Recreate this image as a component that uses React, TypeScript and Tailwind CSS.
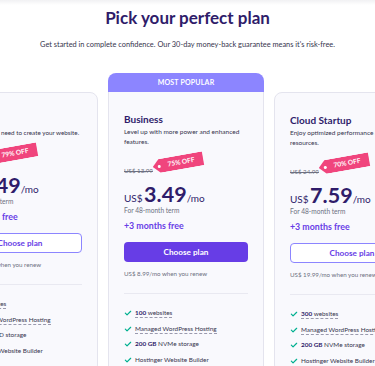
import React from 'react';

type Feature = { bold?: string; text: string; underline?: boolean };

type Plan = {
  name: string;
  desc: string;
  oldPrice: string;
  off: string;
  price: string;
  renew: string;
  popular?: boolean;
  oneLine?: boolean;
  features: Feature[];
};

const plans: Plan[] = [
  {
    name: 'Premium',
    desc: 'Everything you need to create your website.',
    oldPrice: 'US$ 11.99',
    off: '79% OFF',
    price: '2.49',
    renew: 'US$ 6.99/mo when you renew',
    oneLine: true,
    features: [
      { bold: '100', text: 'websites', underline: true },
      { text: 'Managed WordPress Hosting', underline: true },
      { bold: '100 GB', text: 'SSD storage' },
      { text: 'Hostinger Website Builder' },
    ],
  },
  {
    name: 'Business',
    desc: 'Level up with more power and enhanced features.',
    oldPrice: 'US$ 13.99',
    off: '75% OFF',
    price: '3.49',
    renew: 'US$ 8.99/mo when you renew',
    popular: true,
    features: [
      { bold: '100', text: 'websites', underline: true },
      { text: 'Managed WordPress Hosting', underline: true },
      { bold: '200 GB', text: 'NVMe storage' },
      { text: 'Hostinger Website Builder' },
    ],
  },
  {
    name: 'Cloud Startup',
    desc: 'Enjoy optimized performance & powerful resources.',
    oldPrice: 'US$ 24.99',
    off: '70% OFF',
    price: '7.59',
    renew: 'US$ 19.99/mo when you renew',
    features: [
      { bold: '300', text: 'websites', underline: true },
      { text: 'Managed WordPress Hosting', underline: true },
      { bold: '200 GB', text: 'NVMe storage' },
      { text: 'Hostinger Website Builder' },
    ],
  },
];

const Check = () => (
  <svg width="8" height="8" viewBox="0 0 12 12" fill="none" className="shrink-0">
    <path d="M2 6.3l2.6 2.6L10 3.4" stroke="#00b090" strokeWidth="1.8" strokeLinecap="round" strokeLinejoin="round" />
  </svg>
);

const PlanCard = ({ plan }: { plan: Plan }) => (
  <div className="w-[156px] shrink-0 flex flex-col">
    {plan.popular ? (
      <div className="h-[19px] bg-[#8c85ff] rounded-t-[8px] flex items-center justify-center text-white text-[7px] font-bold tracking-[0.2px]">
        MOST POPULAR
      </div>
    ) : (
      <div className="h-[19px]" />
    )}
    <div
      className={
        'flex-1 bg-[#f9f9fd] border border-[#e4e4ee] px-[15px] pt-[20px] ' +
        (plan.popular ? 'rounded-b-[8px] border-t-0' : 'rounded-[8px]')
      }
    >
      <div className="text-[10px] font-bold text-[#2f1c6a] leading-[14px]">{plan.name}</div>
      <div
        className={
          'text-[#36344d] leading-[10px] mt-[1px] ' +
          (plan.oneLine ? 'text-[6.3px] whitespace-nowrap' : 'text-[6.5px]')
        }
      >
        {plan.desc}
      </div>
      <div className="flex items-end mt-[16px] h-[14px]">
        <span className="text-[6.2px] text-[#6d7081] line-through leading-[10px] mb-[1px] whitespace-nowrap">{plan.oldPrice}</span>
        <span className="relative ml-[1px] mb-[3px] rotate-[-10deg] origin-bottom-left">
          <span className="flex items-center h-[14px] pl-[15px] pr-[9px] bg-[#f0457d] text-white text-[6.6px] font-bold whitespace-nowrap [clip-path:polygon(7px_0,100%_0,100%_100%,7px_100%,0_50%)]">
            {plan.off}
          </span>
          <span className="absolute left-[5px] top-[5.5px] w-[3px] h-[3px] rounded-full bg-white" />
        </span>
      </div>
      <div className="flex items-baseline h-[21px] text-[#2f1c6a] mt-[7px] leading-[21px]">
        <span className="text-[10px] mr-[1.5px]">US$</span>
        <span className="text-[21.5px] font-bold">{plan.price}</span>
        <span className="text-[10px]">/mo</span>
      </div>
      <div className="text-[6.6px] text-[#6d7081] leading-[10px]">For 48-month term</div>
      <div className="text-[8.8px] font-bold text-[#673de6] leading-[14px] mt-[4px]">+3 months free</div>
      <button
        className={
          'w-full h-[20px] rounded-[4px] mt-[9px] text-[8.2px] font-bold flex items-center justify-center ' +
          (plan.popular
            ? 'bg-[#673de6] text-white'
            : 'bg-white text-[#673de6] border border-[#8c85ff]')
        }
      >
        Choose plan
      </button>
      <div className="text-[6.2px] text-[#6d7081] leading-[10px] mt-[7px] whitespace-nowrap">{plan.renew}</div>
      <div className="h-px bg-[#e9e9f1] mt-[14px]" />
      <div className="flex flex-col gap-[5.5px] mt-[14px]">
        {plan.features.map((f, i) => (
          <div key={i} className="flex items-center gap-[3px] text-[6.4px] leading-[10px] text-[#36344d] whitespace-nowrap">
            <Check />
            <span className={f.underline ? 'border-b border-dashed border-[#9a9aae] leading-[9px]' : ''}>
              {f.bold && <span className="font-bold text-[#2f1c6a]">{f.bold} </span>}
              {f.text}
            </span>
          </div>
        ))}
      </div>
    </div>
  </div>
);

export default function App() {
  return (
    <div
      className="w-[375px] h-[366px] overflow-hidden bg-white bg-gradient-to-b from-[#f1f1f3] to-white to-[5px] text-[#36344d]"
      style={{ fontFamily: 'Lato, "Noto Sans", sans-serif' }}
    >
      <h1 className="pt-[5px] text-center text-[17px] font-bold text-[#2f1c6a] leading-[26px]">
        Pick your perfect plan
      </h1>
      <p className="text-center text-[7.4px] text-[#36344d] leading-[10px] mt-[9px]">
        Get started in complete confidence. Our 30-day money-back guarantee means it's risk-free.
      </p>
      <div className="flex justify-center gap-[10px] mt-[23px] h-[300px] pr-[3px]">
        {plans.map(p => (
          <PlanCard key={p.name} plan={p} />
        ))}
      </div>
    </div>
  );
}
